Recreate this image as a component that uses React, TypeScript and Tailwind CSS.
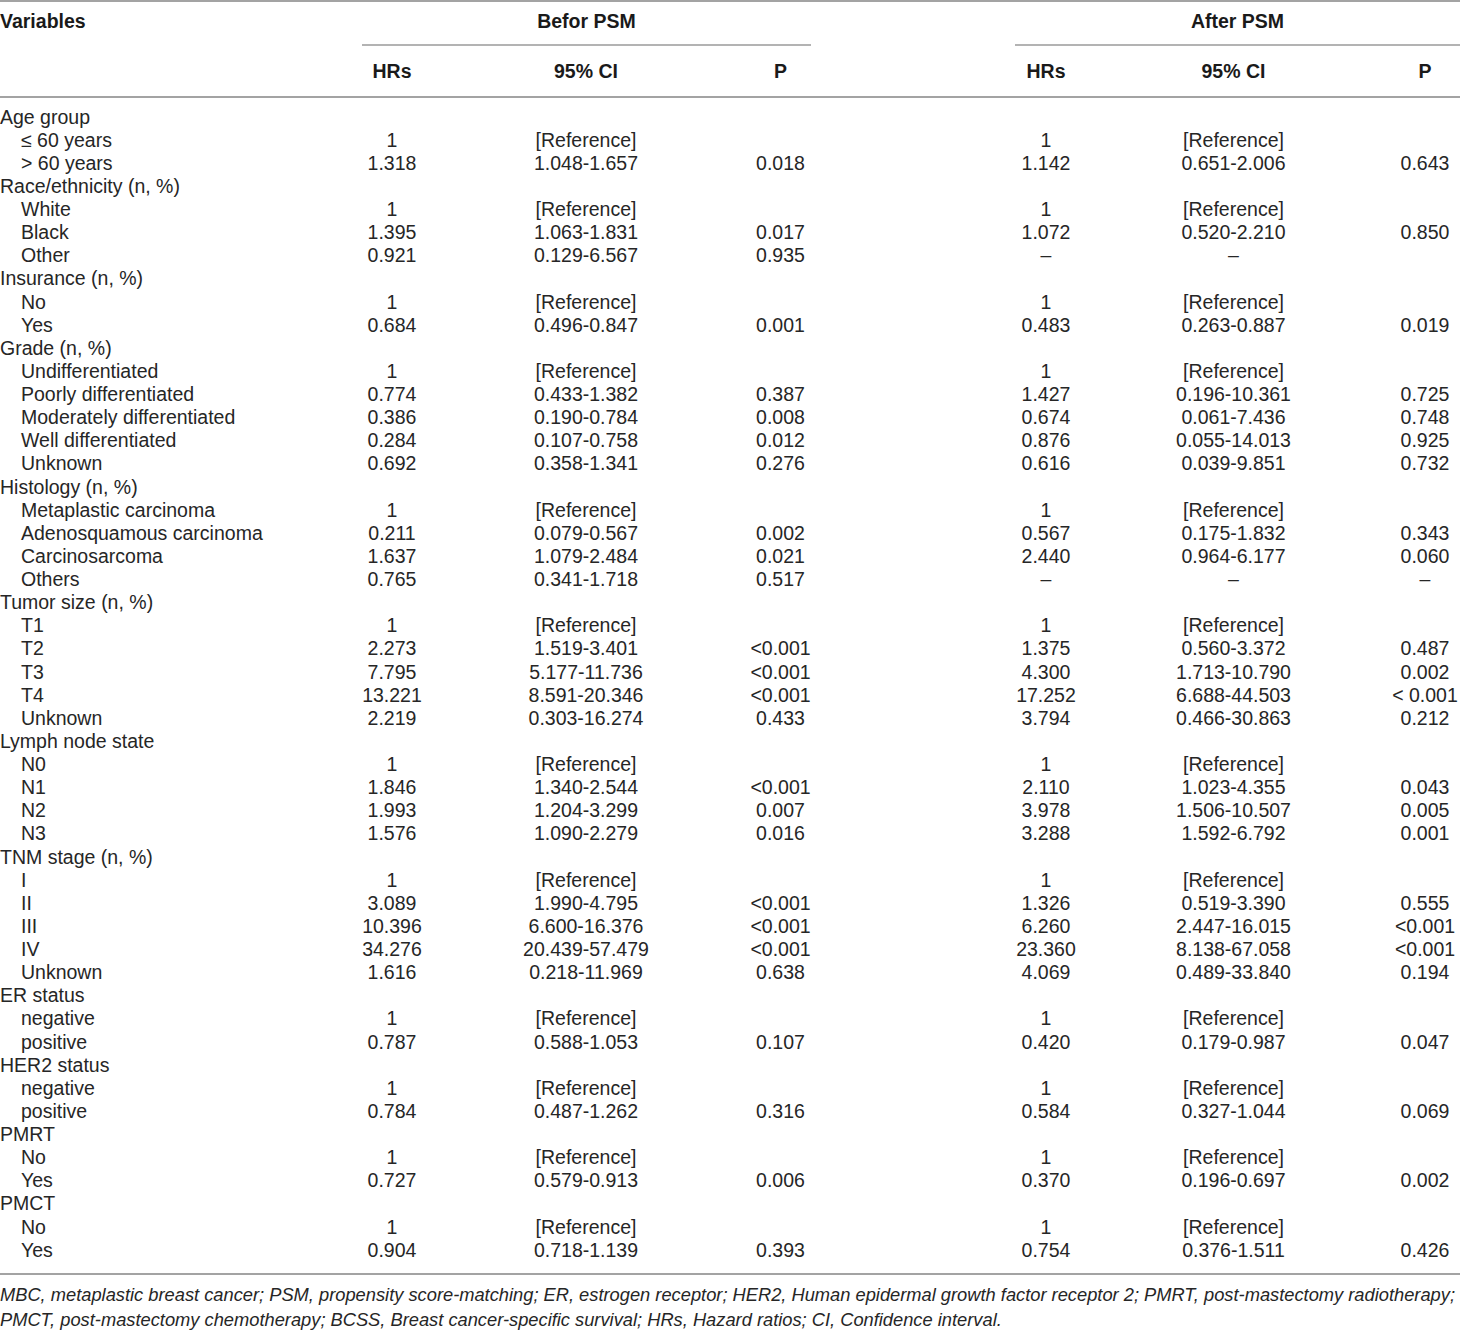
type Row = [string, string, string, string, string, string, string] | string;

const rows: Row[] = [
  "Age group",
  ["≤ 60 years", "1", "[Reference]", "", "1", "[Reference]", ""],
  ["> 60 years", "1.318", "1.048-1.657", "0.018", "1.142", "0.651-2.006", "0.643"],
  "Race/ethnicity (n, %)",
  ["White", "1", "[Reference]", "", "1", "[Reference]", ""],
  ["Black", "1.395", "1.063-1.831", "0.017", "1.072", "0.520-2.210", "0.850"],
  ["Other", "0.921", "0.129-6.567", "0.935", "–", "–", ""],
  "Insurance (n, %)",
  ["No", "1", "[Reference]", "", "1", "[Reference]", ""],
  ["Yes", "0.684", "0.496-0.847", "0.001", "0.483", "0.263-0.887", "0.019"],
  "Grade (n, %)",
  ["Undifferentiated", "1", "[Reference]", "", "1", "[Reference]", ""],
  ["Poorly differentiated", "0.774", "0.433-1.382", "0.387", "1.427", "0.196-10.361", "0.725"],
  ["Moderately differentiated", "0.386", "0.190-0.784", "0.008", "0.674", "0.061-7.436", "0.748"],
  ["Well differentiated", "0.284", "0.107-0.758", "0.012", "0.876", "0.055-14.013", "0.925"],
  ["Unknown", "0.692", "0.358-1.341", "0.276", "0.616", "0.039-9.851", "0.732"],
  "Histology (n, %)",
  ["Metaplastic carcinoma", "1", "[Reference]", "", "1", "[Reference]", ""],
  ["Adenosquamous carcinoma", "0.211", "0.079-0.567", "0.002", "0.567", "0.175-1.832", "0.343"],
  ["Carcinosarcoma", "1.637", "1.079-2.484", "0.021", "2.440", "0.964-6.177", "0.060"],
  ["Others", "0.765", "0.341-1.718", "0.517", "–", "–", "–"],
  "Tumor size (n, %)",
  ["T1", "1", "[Reference]", "", "1", "[Reference]", ""],
  ["T2", "2.273", "1.519-3.401", "<0.001", "1.375", "0.560-3.372", "0.487"],
  ["T3", "7.795", "5.177-11.736", "<0.001", "4.300", "1.713-10.790", "0.002"],
  ["T4", "13.221", "8.591-20.346", "<0.001", "17.252", "6.688-44.503", "< 0.001"],
  ["Unknown", "2.219", "0.303-16.274", "0.433", "3.794", "0.466-30.863", "0.212"],
  "Lymph node state",
  ["N0", "1", "[Reference]", "", "1", "[Reference]", ""],
  ["N1", "1.846", "1.340-2.544", "<0.001", "2.110", "1.023-4.355", "0.043"],
  ["N2", "1.993", "1.204-3.299", "0.007", "3.978", "1.506-10.507", "0.005"],
  ["N3", "1.576", "1.090-2.279", "0.016", "3.288", "1.592-6.792", "0.001"],
  "TNM stage (n, %)",
  ["I", "1", "[Reference]", "", "1", "[Reference]", ""],
  ["II", "3.089", "1.990-4.795", "<0.001", "1.326", "0.519-3.390", "0.555"],
  ["III", "10.396", "6.600-16.376", "<0.001", "6.260", "2.447-16.015", "<0.001"],
  ["IV", "34.276", "20.439-57.479", "<0.001", "23.360", "8.138-67.058", "<0.001"],
  ["Unknown", "1.616", "0.218-11.969", "0.638", "4.069", "0.489-33.840", "0.194"],
  "ER status",
  ["negative", "1", "[Reference]", "", "1", "[Reference]", ""],
  ["positive", "0.787", "0.588-1.053", "0.107", "0.420", "0.179-0.987", "0.047"],
  "HER2 status",
  ["negative", "1", "[Reference]", "", "1", "[Reference]", ""],
  ["positive", "0.784", "0.487-1.262", "0.316", "0.584", "0.327-1.044", "0.069"],
  "PMRT",
  ["No", "1", "[Reference]", "", "1", "[Reference]", ""],
  ["Yes", "0.727", "0.579-0.913", "0.006", "0.370", "0.196-0.697", "0.002"],
  "PMCT",
  ["No", "1", "[Reference]", "", "1", "[Reference]", ""],
  ["Yes", "0.904", "0.718-1.139", "0.393", "0.754", "0.376-1.511", "0.426"],
];

const cols = "grid grid-cols-[362px_60px_328px_61px_204px_62px_313px_70px]";

function BodyRow({ row }: { row: Row }) {
  if (typeof row === "string") {
    return (
      <div className="h-[23.14px] leading-[23.14px] whitespace-nowrap">{row}</div>
    );
  }
  const [label, hr1, ci1, p1, hr2, ci2, p2] = row;
  return (
    <div className={`${cols} h-[23.14px] leading-[23.14px] whitespace-nowrap`}>
      <div className="pl-[21px]">{label}</div>
      <div className="text-center">{hr1}</div>
      <div className="text-center">{ci1}</div>
      <div className="text-center">{p1}</div>
      <div />
      <div className="text-center">{hr2}</div>
      <div className="text-center">{ci2}</div>
      <div className="text-center">{p2}</div>
    </div>
  );
}

export default function App() {
  return (
    <div className="w-[1460px] bg-white text-[#262626] font-['Liberation_Sans',Arial,sans-serif] text-[19.5px]">
      <div className="border-t-2 border-[#a3a3a3]">
        <div className={`${cols} h-[44px] font-bold text-[#1a1a1a]`}>
          <div className="leading-[38px]">Variables</div>
          <div className="col-span-3 border-b-2 border-[#b3b3b3] text-center leading-[38px]">
            Befor PSM
          </div>
          <div />
          <div className="col-span-3 border-b-2 border-[#b3b3b3] text-center leading-[38px]">
            After PSM
          </div>
        </div>
        <div className={`${cols} h-[50px] leading-[50px] font-bold text-[#1a1a1a]`}>
          <div />
          <div className="text-center">HRs</div>
          <div className="text-center">95% CI</div>
          <div className="text-center">P</div>
          <div />
          <div className="text-center">HRs</div>
          <div className="text-center">95% CI</div>
          <div className="text-center">P</div>
        </div>
      </div>
      <div className="border-t-2 border-b-2 border-[#a3a3a3] pt-[7.5px] pb-[11px]">
        {rows.map((r, i) => (
          <BodyRow key={i} row={r} />
        ))}
      </div>
      <div className="pt-[7px] text-[18.3px] leading-[25px] italic whitespace-nowrap">
        MBC, metaplastic breast cancer; PSM, propensity score-matching; ER, estrogen receptor; HER2,
        Human epidermal growth factor receptor 2; PMRT, post-mastectomy radiotherapy;
        <br />
        PMCT, post-mastectomy chemotherapy; BCSS, Breast cancer-specific survival; HRs, Hazard ratios;
        CI, Confidence interval.
      </div>
    </div>
  );
}
